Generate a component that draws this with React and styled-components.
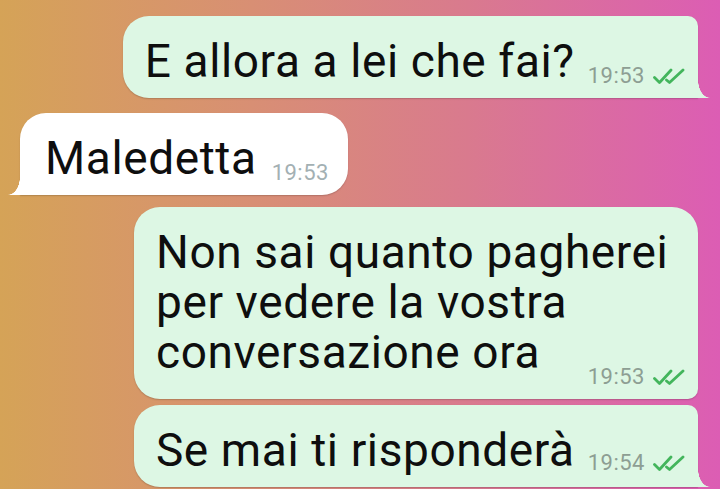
import styled, { createGlobalStyle, css } from 'styled-components';

const Global = createGlobalStyle`
  html, body {
    margin: 0;
    padding: 0;
    background: #d99a6c;
  }
`;

const OUT_BG = '#ddf7e4';
const IN_BG = '#ffffff';

const Screen = styled.div`
  box-sizing: border-box;
  width: 720px;
  height: 489px;
  overflow: hidden;
  display: flex;
  flex-direction: column;
  padding: 16px 22px 0 20px;
  background: linear-gradient(90deg, #d5a357 0%, #d88f74 35%, #d97a8e 65%, #dc5db4 100%);
  font-family: Roboto, "Noto Sans", sans-serif;
`;

const Row = styled.div`
  display: flex;
  justify-content: ${p => (p.$out ? 'flex-end' : 'flex-start')};
  margin-top: ${p => p.$gap || 0}px;
`;

const Bubble = styled.div`
  position: relative;
  box-sizing: border-box;
  display: flow-root;
  max-width: ${p => p.$max || '590px'};
  padding: 20px ${p => (p.$out ? '13px' : '19px')} 12px ${p => (p.$out ? '22px' : '25px')};
  background: ${p => (p.$out ? OUT_BG : IN_BG)};
  border-radius: ${p => p.$radius};
  box-shadow: 0 1px 1.5px rgba(0, 0, 0, 0.18);
  font-size: 46px;
  letter-spacing: 0.6px;
  line-height: 50px;
  color: #0e0e0e;

  ${p =>
    p.$tail &&
    p.$out &&
    css`
      &::after {
        content: '';
        position: absolute;
        right: -12px;
        bottom: 0;
        width: 12px;
        height: 18px;
        background: radial-gradient(12px 18px at 100% 0, transparent 97%, ${OUT_BG} 100%);
      }
    `}

  ${p =>
    p.$tail &&
    !p.$out &&
    css`
      &::after {
        content: '';
        position: absolute;
        left: -12px;
        bottom: 0;
        width: 12px;
        height: 18px;
        background: radial-gradient(12px 18px at 0 0, transparent 97%, ${IN_BG} 100%);
      }
    `}
`;

const Meta = styled.span`
  float: right;
  display: flex;
  align-items: center;
  gap: 8px;
  margin: ${p => p.$drop || 30}px 0 0 ${p => (p.$out ? 13 : 15)}px;
  font-size: 22px;
  letter-spacing: 0.5px;
  line-height: 20px;
  color: ${p => (p.$out ? '#8d9e93' : '#a3b0b3')};
`;

const Ticks = () => (
  <svg width="32" height="16" viewBox="0 0 32 16" fill="none">
    <path d="M1.5 9.5 L6.5 14.5 L18 2" stroke="#43b55c" strokeWidth="2.8" strokeLinecap="round" strokeLinejoin="round" />
    <path d="M13.5 12 L16.5 14.5 L30 2" stroke="#43b55c" strokeWidth="2.8" strokeLinecap="round" strokeLinejoin="round" />
  </svg>
);

const messages = [
  { out: true, text: 'E allora a lei che fai?', time: '19:53', radius: '26px 10px 0 26px', tail: true, gap: 0 },
  { out: false, text: 'Maledetta', time: '19:53', radius: '26px 26px 26px 0', tail: true, gap: 15 },
  {
    out: true,
    text: 'Non sai quanto pagherei per vedere la vostra conversazione ora',
    time: '19:53',
    radius: '26px 26px 10px 26px',
    gap: 12,
    max: '564px',
    drop: 40,
  },
  { out: true, text: 'Se mai ti risponderà', time: '19:54', radius: '26px 10px 0 26px', tail: true, gap: 6, drop: 28 },
];

export default function App() {
  return (
    <>
      <Global />
      <Screen>
        {messages.map((m, i) => (
          <Row key={i} $out={m.out} $gap={m.gap}>
            <Bubble $out={m.out} $radius={m.radius} $tail={m.tail} $max={m.max}>
              {m.text}
              <Meta $out={m.out} $drop={m.drop}>
                {m.time}
                {m.out && <Ticks />}
              </Meta>
            </Bubble>
          </Row>
        ))}
      </Screen>
    </>
  );
}
